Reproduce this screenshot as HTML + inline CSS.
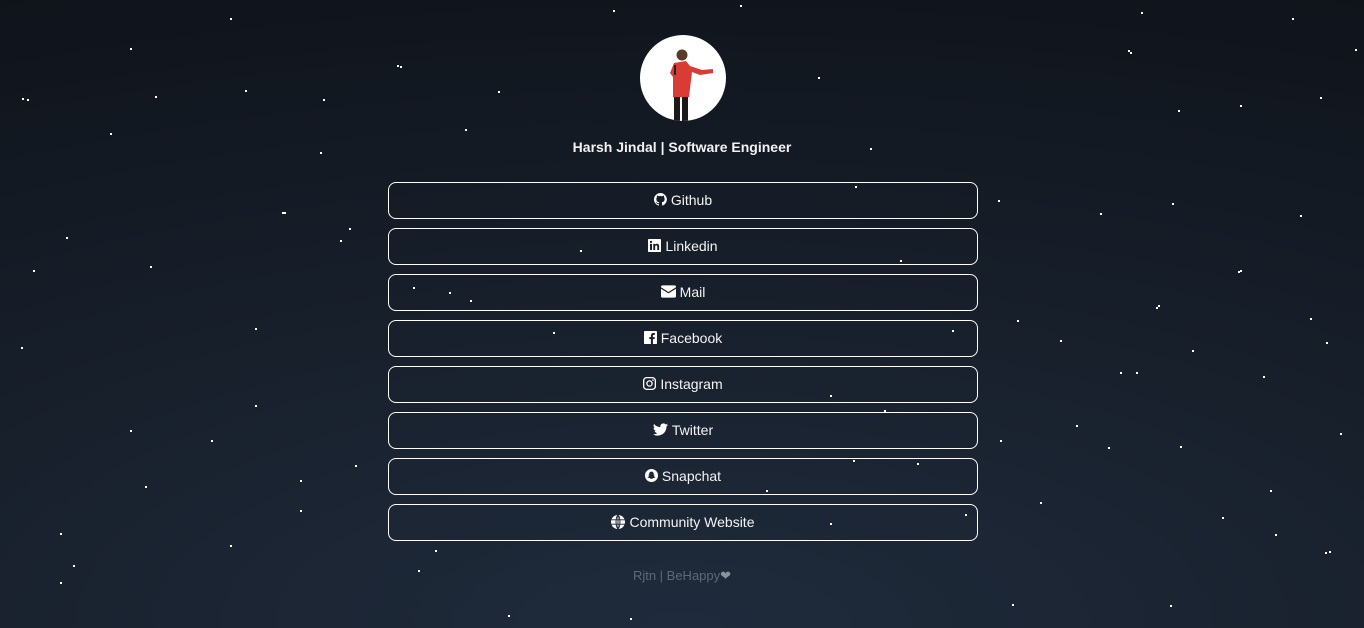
<!DOCTYPE html>
<html><head><meta charset="utf-8"><style>
html,body{margin:0;padding:0;width:1364px;height:628px;overflow:hidden}
body{background:radial-gradient(ellipse 130% 110% at 50% 100%,#1f2b3c 0%,#18202c 45%,#0f131a 100%);font-family:"Liberation Sans",sans-serif;color:#fff;position:relative}
.stars{position:absolute;left:0;top:0;width:2px;height:2px;background:transparent;
box-shadow:130px 48px #fff,27px 99px #fff,110px 133px #fff,155px 96px #fff,245px 90px #fff,323px 99px #fff,320px 152px #fff,400px 66px #fff,498px 91px #fff,465px 129px #fff,284px 212px #fff,150px 266px #fff,66px 237px #fff,33px 270px #fff,349px 228px #fff,340px 240px #fff,255px 328px #fff,21px 347px #fff,255px 405px #fff,211px 440px #fff,130px 430px #fff,300px 480px #fff,355px 465px #fff,145px 486px #fff,60px 533px #fff,73px 565px #fff,60px 582px #fff,230px 545px #fff,300px 510px #fff,418px 570px #fff,435px 550px #fff,508px 615px #fff,630px 618px #fff,740px 5px #fff,870px 148px #fff,818px 77px #fff,1130px 52px #fff,1141px 12px #fff,1178px 110px #fff,1292px 18px #fff,1320px 97px #fff,1355px 49px #fff,1100px 213px #fff,1172px 203px #fff,1238px 271px #fff,1156px 307px #fff,1300px 215px #fff,1310px 318px #fff,1326px 342px #fff,1192px 350px #fff,1136px 372px #fff,1120px 372px #fff,1060px 340px #fff,952px 330px #fff,1017px 320px #fff,1108px 447px #fff,1180px 446px #fff,1340px 433px #fff,1222px 517px #fff,1275px 534px #fff,1325px 552px #fff,1170px 605px #fff,1012px 604px #fff,965px 514px #fff,917px 463px #fff,853px 460px #fff,884px 410px #fff,998px 200px #fff,855px 186px #fff,1263px 376px #fff,1270px 490px #fff,1040px 502px #fff,22px 98px #fff,230px 18px #fff,613px 10px #fff,580px 250px #fff,449px 292px #fff,553px 332px #fff,830px 395px #fff,830px 523px #fff,766px 490px #fff,470px 300px #fff,413px 287px #fff,1000px 440px #fff,1076px 425px #fff,1240px 105px #fff,900px 260px #fff,1240px 270px #fff,1158px 305px #fff,1329px 551px #fff,1128px 50px #fff,397px 65px #fff,282px 212px #fff}
.av{position:absolute;left:640px;top:35px;width:86px;height:86px;border-radius:50%;background:#fff;overflow:hidden}
h1{position:absolute;left:0;width:100%;top:139px;margin:0;text-align:center;font-size:14px;font-weight:bold;color:#f2f2f2}
.btn{position:absolute;left:388px;width:588px;height:35px;border:1px solid #fff;border-radius:8px;display:flex;align-items:center;justify-content:center;font-size:14px;color:#f4f4f4;box-sizing:content-box;padding-bottom:0}
.btn span{position:relative;top:-1px;display:flex;align-items:center}
.btn svg{width:13px;height:13px;margin-right:4px;fill:#fff}
.foot{position:absolute;left:0;width:100%;top:568px;text-align:center;font-size:13px;color:#5f6875}
</style></head><body>
<div class="stars"></div>
<div class="av"><svg width="86" height="86" viewBox="0 0 86 86">
<rect x="34" y="58" width="6" height="30" fill="#1a1a1a"/><rect x="42" y="58" width="6" height="30" fill="#1a1a1a"/>
<path d="M34 28 L46 26 L50 31 L62 35 L73 34 L73 38 L60 40 L52 37 L49 62 L33 62 L33 42 L30 38 Z" fill="#d93b35"/>
<circle cx="42" cy="20" r="5.5" fill="#5a3a2a"/>
<rect x="34" y="30" width="2" height="10" fill="#222"/></svg></div>
<h1>Harsh Jindal | Software Engineer</h1>
<div class="btn" style="top:182px"><span><svg viewBox="0 0 16 16"><path d="M8 0a8 8 0 0 0-2.5 15.6c.4 0 .5-.2.5-.4v-1.5c-2.2.5-2.7-1-2.7-1-.4-.9-.9-1.2-.9-1.2-.7-.5.1-.5.1-.5.8.1 1.2.8 1.2.8.7 1.3 1.9.9 2.3.7.1-.5.3-.9.5-1.100-1.8-.2-3.6-.9-3.6-4 0-.9.3-1.600.8-2.100-.1-.2-.4-1 .1-2.100 0 0 .7-.2 2.2.8a7.5 7.5 0 0 1 4 0c1.5-1 2.2-.8 2.2-.8.4 1.1.2 1.9.1 2.1.5.6.8 1.3.8 2.1 0 3.1-1.9 3.8-3.6 4 .3.3.5.8.5 1.5v2.2c0 .2.1.5.6.4A8 8 0 0 0 8 0z"/></svg>Github</span></div>
<div class="btn" style="top:228px"><span><svg viewBox="0 0 16 16"><path d="M1 0h14a1 1 0 0 1 1 1v14a1 1 0 0 1-1 1H1a1 1 0 0 1-1-1V1a1 1 0 0 1 1-1zm1.5 6v7.5h2.4V6zm1.2-3.8a1.4 1.4 0 1 0 0 2.8 1.4 1.4 0 0 0 0-2.8zM6.5 6v7.5h2.3V9.8c0-1 .2-1.9 1.4-1.9s1.2 1.1 1.2 2v3.6h2.3V9.4c0-2-.4-3.5-2.8-3.5-1.1 0-1.9.6-2.2 1.2V6z"/></svg>Linkedin</span></div>
<div class="btn" style="top:274px"><span><svg viewBox="0 0 16 13" style="width:15px"><path d="M0 1.5C0 .7.7 0 1.5 0h13c.8 0 1.5.7 1.5 1.5v.5L8 7 0 2zM0 3.5l8 5 8-5V11.5c0 .8-.7 1.5-1.5 1.5h-13C.7 13 0 12.3 0 11.5z"/></svg>Mail</span></div>
<div class="btn" style="top:320px"><span><svg viewBox="0 0 16 16"><path d="M15 0H1a1 1 0 0 0-1 1v14a1 1 0 0 0 1 1h7.5v-6H6.5V7.5h2V5.6c0-2 1.2-3.2 3-3.2.9 0 1.7.1 1.9.1v2.2h-1.3c-1 0-1.2.5-1.2 1.2v1.6h2.4L13 10h-2v6h4a1 1 0 0 0 1-1V1a1 1 0 0 0-1-1z"/></svg>Facebook</span></div>
<div class="btn" style="top:366px"><span><svg viewBox="0 0 16 16"><path d="M4.5 0h7A4.5 4.5 0 0 1 16 4.5v7a4.5 4.5 0 0 1-4.5 4.5h-7A4.5 4.5 0 0 1 0 11.5v-7A4.5 4.5 0 0 1 4.5 0zm0 1.6A2.9 2.9 0 0 0 1.6 4.5v7a2.9 2.9 0 0 0 2.9 2.9h7a2.9 2.9 0 0 0 2.9-2.9v-7a2.9 2.9 0 0 0-2.9-2.9zM8 4a4 4 0 1 1 0 8 4 4 0 0 1 0-8zm0 1.6a2.4 2.4 0 1 0 0 4.8 2.4 2.4 0 0 0 0-4.8zm4.2-2.8a1 1 0 1 1 0 2 1 1 0 0 1 0-2z"/></svg>Instagram</span></div>
<div class="btn" style="top:412px"><span><svg viewBox="0 0 16 13" style="width:15px"><path d="M16 1.5a6.6 6.6 0 0 1-1.9.5A3.3 3.3 0 0 0 15.6.2a6.6 6.6 0 0 1-2.1.8A3.3 3.3 0 0 0 7.9 4 9.3 9.3 0 0 1 1.1.6a3.3 3.3 0 0 0 1 4.4 3.3 3.3 0 0 1-1.5-.4 3.3 3.3 0 0 0 2.6 3.2 3.3 3.3 0 0 1-1.5.1 3.3 3.3 0 0 0 3.1 2.3A6.6 6.6 0 0 1 0 11.5 9.3 9.3 0 0 0 5 13c6 0 9.4-5 9.4-9.4v-.4A6.7 6.7 0 0 0 16 1.5z"/></svg>Twitter</span></div>
<div class="btn" style="top:458px"><span><svg viewBox="0 0 16 16"><path d="M8 0a8 8 0 1 0 0 16A8 8 0 0 0 8 0zm0 3.2c1.6 0 2.7 1.2 2.7 2.8v1.3l1-.3c.3 0 .5.3.2.5l-1.1.5c.4 1 1.2 1.8 2 2.1-.1.4-.8.5-1.3.6l-.2.5-1-.1c-.6.2-1.1 1-2.3 1s-1.7-.8-2.3-1l-1 .1-.2-.5c-.5-.1-1.2-.2-1.3-.6.8-.3 1.6-1.1 2-2.1L3.9 7.5c-.3-.2-.1-.5.2-.5l1 .3V6c0-1.6 1.1-2.8 2.9-2.8z"/></svg>Snapchat</span></div>
<div class="btn" style="top:504px"><span><svg viewBox="0 0 16 16" style="width:14px;height:14px"><circle cx="8" cy="8" r="8"/><path d="M0 5.5h16M0 10.5h16M8 0v16M8 0C5 3 5 13 8 16M8 0c3 3 3 13 0 16" stroke="#1b2433" stroke-width="1.1" fill="none"/></svg>Community Website</span></div>
<div class="foot">Rjtn | BeHappy<span style="color:#8a929c">&#10084;</span></div>
</body></html>
